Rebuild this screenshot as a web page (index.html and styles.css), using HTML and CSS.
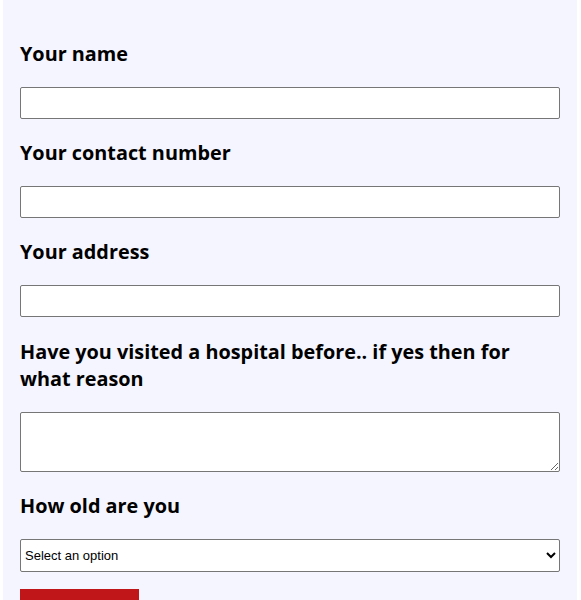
FILE: index.html
```html
<!DOCTYPE html>
<html>
<head>
<meta charset="utf-8">
<link rel="stylesheet" href="styles.css">
</head>
<body>
<div class="page">
  <form class="form">
    <div class="field">
      <label class="label" for="name">Your name</label>
      <input class="input" id="name" type="text">
    </div>
    <div class="field">
      <label class="label" for="phone">Your contact number</label>
      <input class="input" id="phone" type="text">
    </div>
    <div class="field">
      <label class="label" for="addr">Your address</label>
      <input class="input" id="addr" type="text">
    </div>
    <div class="field field-tall">
      <label class="label" for="hosp">Have you visited a hospital before.. if yes then for what reason</label>
      <textarea class="textarea" id="hosp"></textarea>
    </div>
    <div class="field">
      <label class="label" for="age">How old are you</label>
      <select class="select" id="age">
        <option>Select an option</option>
      </select>
    </div>
    <button class="submit" type="button">Submit</button>
  </form>
</div>
</body>
</html>
```
FILE: styles.css
```css
html, body {
  margin: 0;
  padding: 0;
  background: #ffffff;
}
.page {
  margin: 0 4px 0 3px;
  background: #f4f5fe;
  min-height: 700px;
  padding: 40px 17px 0 17px;
  font-family: "Open Sans", sans-serif;
}
.form {
  display: flex;
  flex-direction: column;
  gap: 20px;
}
.field {
  display: flex;
  flex-direction: column;
  gap: 20px;
}
.field-tall {
  margin-top: 1px;
}
.label {
  font-size: 19.84px;
  font-weight: 700;
  line-height: 27px;
  color: #000;
}
.input {
  box-sizing: border-box;
  height: 32px;
  width: 100%;
  margin: 0;
  border: 1px solid #767676;
  border-radius: 2px;
  background: #fff;
}
.textarea {
  box-sizing: border-box;
  height: 60px;
  width: 100%;
  margin: 0;
  border: 1px solid #767676;
  border-radius: 2px;
  background: #fff;
}
.select {
  box-sizing: border-box;
  height: 33px;
  width: 100%;
  margin: 0;
  border: 1px solid #767676;
  border-radius: 2px;
  background: #fff;
  font-family: "Liberation Sans", Arial, sans-serif;
  font-size: 13px;
  color: #000;
}
.submit {
  align-self: flex-start;
  width: 119px;
  height: 44px;
  margin-top: -3px;
  border: none;
  background: #c0161a;
  color: #fff;
  font-family: "Open Sans", sans-serif;
  font-size: 16px;
  font-weight: 700;
}
```
